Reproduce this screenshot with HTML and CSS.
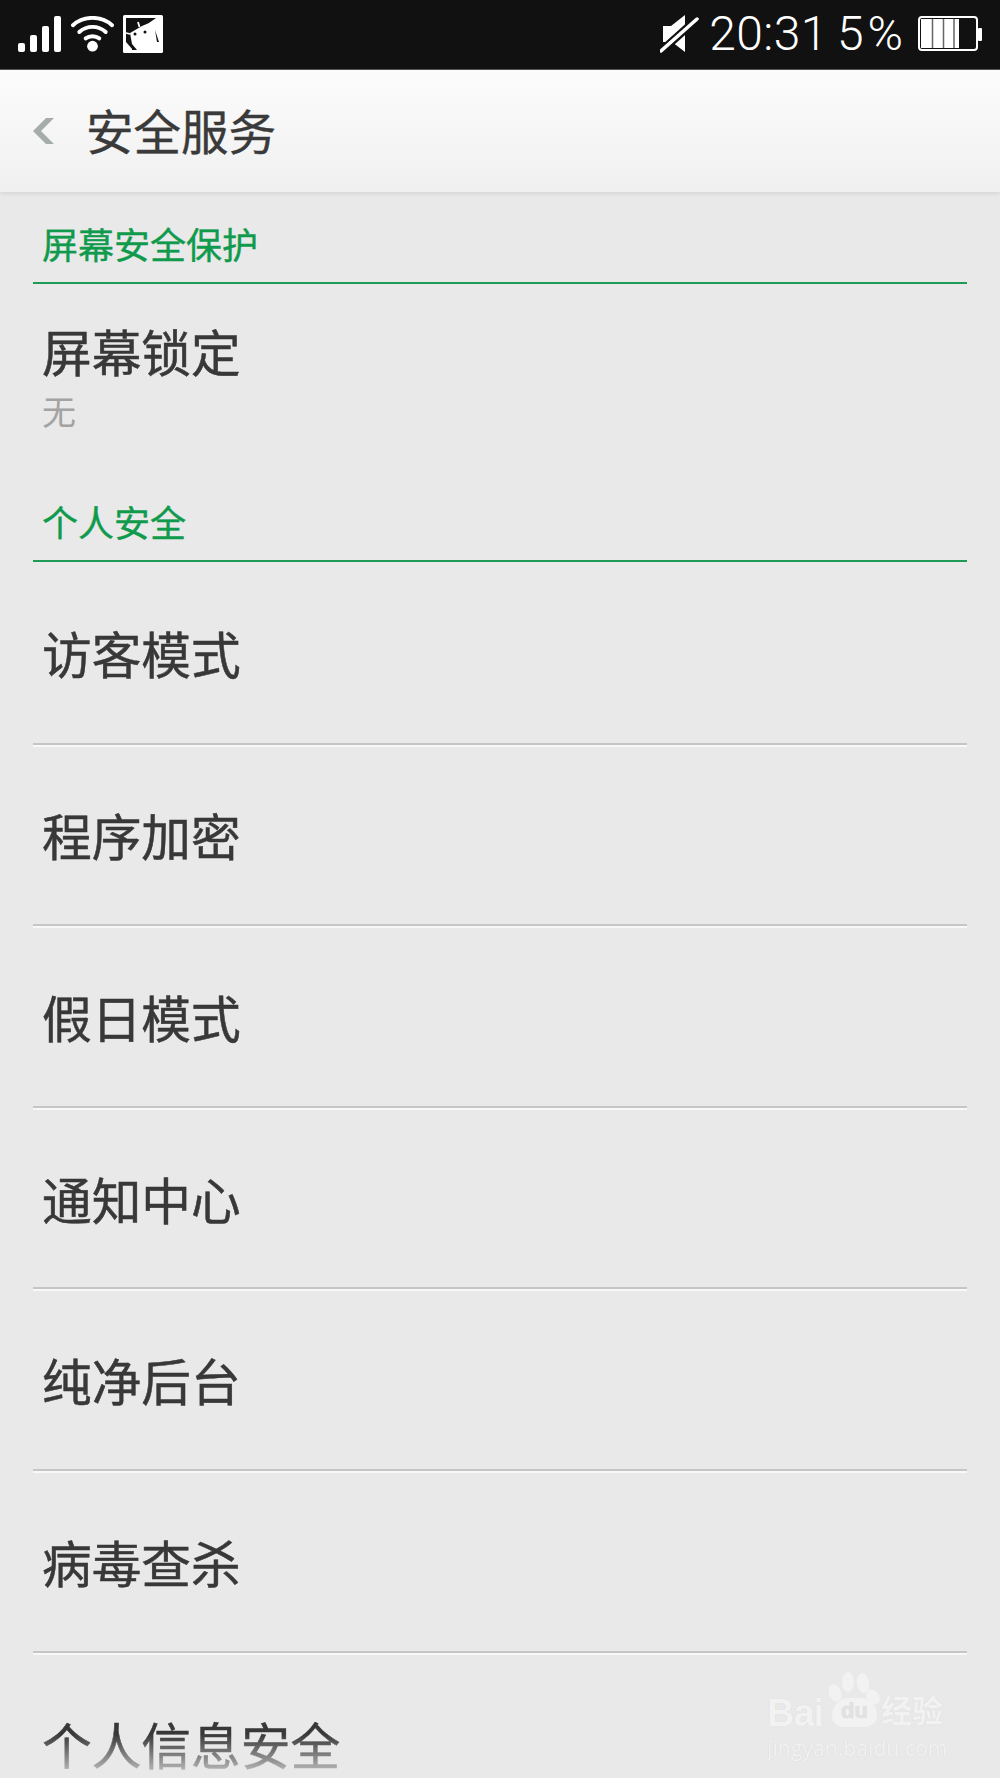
FILE: index.html
```html
<!DOCTYPE html>
<html lang="zh-CN">
<head>
    <meta charset="UTF-8">
    <title>安全服务</title>
    <link rel="stylesheet" href="styles.css">
</head>
<body>
    <div class="phone">
        <div class="status-bar">
            <div class="status-left">
                <svg class="icon-signal" width="44" height="36" viewBox="0 0 44 36">
                    <rect x="0" y="27" width="7" height="9" rx="2" fill="#fff"/>
                    <rect x="12" y="19" width="7" height="17" rx="2" fill="#fff"/>
                    <rect x="24" y="10" width="7" height="26" rx="2" fill="#fff"/>
                    <rect x="36" y="0" width="7" height="36" rx="2" fill="#fff"/>
                </svg>
                <svg class="icon-wifi" width="43" height="36" viewBox="0 0 44 36">
                    <path d="M2 9 C13 -1 31 -1 42 9" fill="none" stroke="#fff" stroke-width="4" stroke-linecap="round"/>
                    <path d="M8.500 16 C16 9 28 9 35.500 16" fill="none" stroke="#fff" stroke-width="4" stroke-linecap="round"/>
                    <path d="M15 22.500 C19 19.500 25 19.500 29 22.500" fill="none" stroke="#fff" stroke-width="4" stroke-linecap="round"/>
                    <circle cx="22" cy="30.500" r="5.500" fill="#fff"/>
                </svg>
                <svg class="icon-shot" width="40" height="38" viewBox="0 0 40 38">
                    <rect width="40" height="38" rx="1.500" fill="#fff"/>
                    <path d="M3 3 H33 L26 8 L37 24 V35 H10 L3 27 Z" fill="#111"/>
                    <path d="M26 8 L37 3 V35 H14 L9 29 L7 18 L19 11 Z" fill="#fff"/>
                    <path d="M9 30 L12 35 H9 Z M32 15 L36 27 L34 27 Z" fill="#111"/>
                    <circle cx="12" cy="19" r="1.500" fill="#111"/>
                    <circle cx="22" cy="17" r="1.500" fill="#111"/>
                    <path d="M15 7 L16.500 12 M3 18 L7 19" stroke="#fff" stroke-width="1.800"/>
                </svg>
            </div>
            <div class="status-right">
                <svg class="icon-mute" width="40" height="38" viewBox="0 0 40 38">
                    <path d="M3 11 H11 L25 0 V37 L12 27 H3 Z" fill="#fff"/>
                    <path d="M-1 38 L37 4" stroke="#111" stroke-width="8"/>
                    <path d="M1 36 L37 4" stroke="#fff" stroke-width="3.500" stroke-linecap="round"/>
                </svg>
                <span class="clock">20:31</span>
                <span class="percent">5%</span>
                <svg class="icon-battery" width="64" height="36" viewBox="0 0 64 36">
                    <rect x="1" y="1" width="58" height="33" rx="3" fill="#111" stroke="#fff" stroke-width="2"/>
                    <rect x="3" y="3" width="38" height="29" fill="#fff"/>
                    <path d="M14.500 3 V32 M25.500 3 V32 M36 3 V32" stroke="#666" stroke-width="1.500"/>
                    <rect x="60" y="12" width="4" height="13" rx="1" fill="#fff"/>
                </svg>
            </div>
        </div>

        <div class="title-bar">
            <svg class="icon-back" width="22" height="26" viewBox="0 0 22 26">
                <path d="M21 0 L8 13 L21 26 H13 L0 13 L13 0 Z" fill="#a5adab"/>
            </svg>
            <h1 class="title">安全服务</h1>
        </div>

        <div class="section-head">屏幕安全保护</div>
        <div class="lock-item">
            <div class="item-name">屏幕锁定</div>
            <div class="item-sub">无</div>
        </div>

        <div class="section-head section-second">个人安全</div>
        <div class="list">
            <div class="row"><span class="item-name">访客模式</span></div>
            <div class="row"><span class="item-name">程序加密</span></div>
            <div class="row"><span class="item-name">假日模式</span></div>
            <div class="row"><span class="item-name">通知中心</span></div>
            <div class="row"><span class="item-name">纯净后台</span></div>
            <div class="row"><span class="item-name">病毒查杀</span></div>
            <div class="row row-last"><span class="item-name">个人信息安全</span></div>
        </div>

        <div class="bottom-fade"></div>

        <div class="watermark">
            <div class="wm-logo">
                <span class="wm-bai">Bai</span>
                <span class="wm-du">du</span>
                <span class="wm-cn">经验</span>
                <svg class="wm-paw" width="56" height="44" viewBox="0 0 56 44">
                    <ellipse cx="7" cy="21" rx="6" ry="9" fill="#f2f2f2" transform="rotate(-20 7 21)"/>
                    <ellipse cx="20" cy="10" rx="6" ry="10" fill="#f2f2f2"/>
                    <ellipse cx="35" cy="11" rx="6" ry="10" fill="#f2f2f2" transform="rotate(-10 35 11)"/>
                    <ellipse cx="45" cy="25" rx="6" ry="8" fill="#f2f2f2" transform="rotate(-35 45 25)"/>
                </svg>
            </div>
            <div class="wm-url">jingyan.baidu.com</div>
        </div>
    </div>
</body>
</html>
```

FILE: styles.css
```css
* {
    box-sizing: border-box;
}

html, body {
    margin: 0;
    padding: 0;
}

body {
    background-color: #e9e9e9;
    font-family: "Liberation Sans", "Noto Sans CJK SC", sans-serif;
}

.phone {
    position: relative;
    width: 1000px;
    height: 1778px;
    overflow: hidden;
    background-color: #e9e9e9;
}

.status-bar {
    display: flex;
    justify-content: space-between;
    align-items: center;
    height: 70px;
    padding: 0 18px 0 18px;
    background-color: #111;
    color: #fff;
    border-bottom: 1px solid #555;
}

.status-left {
    display: flex;
    align-items: center;
    gap: 9px;
    margin-bottom: 2px;
}

.status-right {
    display: flex;
    align-items: center;
    margin-bottom: 2px;
}

.clock,
.percent {
    font-family: "Roboto", "Liberation Sans", sans-serif;
    font-weight: 300;
    font-size: 48px;
    line-height: 50px;
}

.clock {
    margin-left: 9px;
    letter-spacing: 0.400px;
}

.percent {
    margin-left: 9px;
    letter-spacing: 4px;
}

.icon-battery {
    margin-left: 11px;
}

.title-bar {
    display: flex;
    align-items: center;
    height: 122px;
    padding: 0 0 4px 33px;
    background: linear-gradient(#fcfcfc, #f0f0f0);
    box-shadow: 0 2px 4px rgba(0, 0, 0, 0.08);
}

.icon-back {
    flex: none;
    margin-top: 4px;
}

.title {
    margin: 0 0 0 31px;
    font-size: 47.500px;
    font-weight: 400;
    color: #3a3a3a;
    -webkit-text-stroke: 0.4px #3a3a3a;
}

.section-head {
    margin: 0 33px;
    height: 92px;
    padding: 30px 10px 0 9px;
    font-size: 36px;
    line-height: 50px;
    color: #109a4c;
    -webkit-text-stroke: 0.4px #109a4c;
    border-bottom: 2px solid #1f9c58;
}

.section-second {
    height: 95px;
    padding-top: 33px;
}

.lock-item {
    height: 183px;
    padding: 40px 42px 0;
}

.lock-item .item-name {
    line-height: 62px;
}

.item-name {
    font-size: 49.700px;
    color: #383838;
    -webkit-text-stroke: 0.5px #383838;
}

.item-sub {
    margin-top: 5px;
    font-size: 34px;
    line-height: 44px;
    color: #a3a3a3;
}

.list {
    margin: 0 33px;
}

.row {
    display: flex;
    align-items: center;
    height: 181.600px;
    padding: 0 9px 0;
    border-bottom: 2px solid #c6c6c6;
    box-shadow: 0 2px 0 #f8f8f8;
}

.row:first-child {
    height: 182.600px;
}

.row-last {
    border-bottom: none;
    box-shadow: none;
}

/* list fades out at the bottom edge */
.bottom-fade {
    position: absolute;
    left: 0;
    right: 0;
    bottom: 0;
    height: 44px;
    background: linear-gradient(rgba(233, 233, 233, 0), rgba(233, 233, 233, 0.85));
}

.watermark {
    position: absolute;
    left: 767px;
    top: 1670px;
    width: 180px;
    color: #f2f2f2;
    text-shadow: 0 0 1px #d0d0d0;
}

.wm-logo {
    position: relative;
    height: 64px;
}

.wm-bai {
    position: absolute;
    left: 0;
    top: 23px;
    font-size: 38px;
    font-weight: 700;
    letter-spacing: -1px;
    line-height: 40px;
}

.wm-du {
    position: absolute;
    left: 65px;
    top: 28px;
    width: 45px;
    height: 29px;
    font-size: 22px;
    font-weight: 700;
    line-height: 26px;
    text-align: center;
    color: #e2e2e2;
    background-color: #f2f2f2;
    border-radius: 18px 18px 12px 12px;
}

.wm-cn {
    position: absolute;
    left: 114px;
    top: 24px;
    font-size: 31px;
    font-weight: 700;
    line-height: 36px;
}

.wm-paw {
    position: absolute;
    left: 61px;
    top: 2px;
}

.wm-url {
    font-family: "Open Sans", "Liberation Sans", sans-serif;
    font-size: 21px;
    line-height: 28px;
    letter-spacing: 0.100px;
}
```
